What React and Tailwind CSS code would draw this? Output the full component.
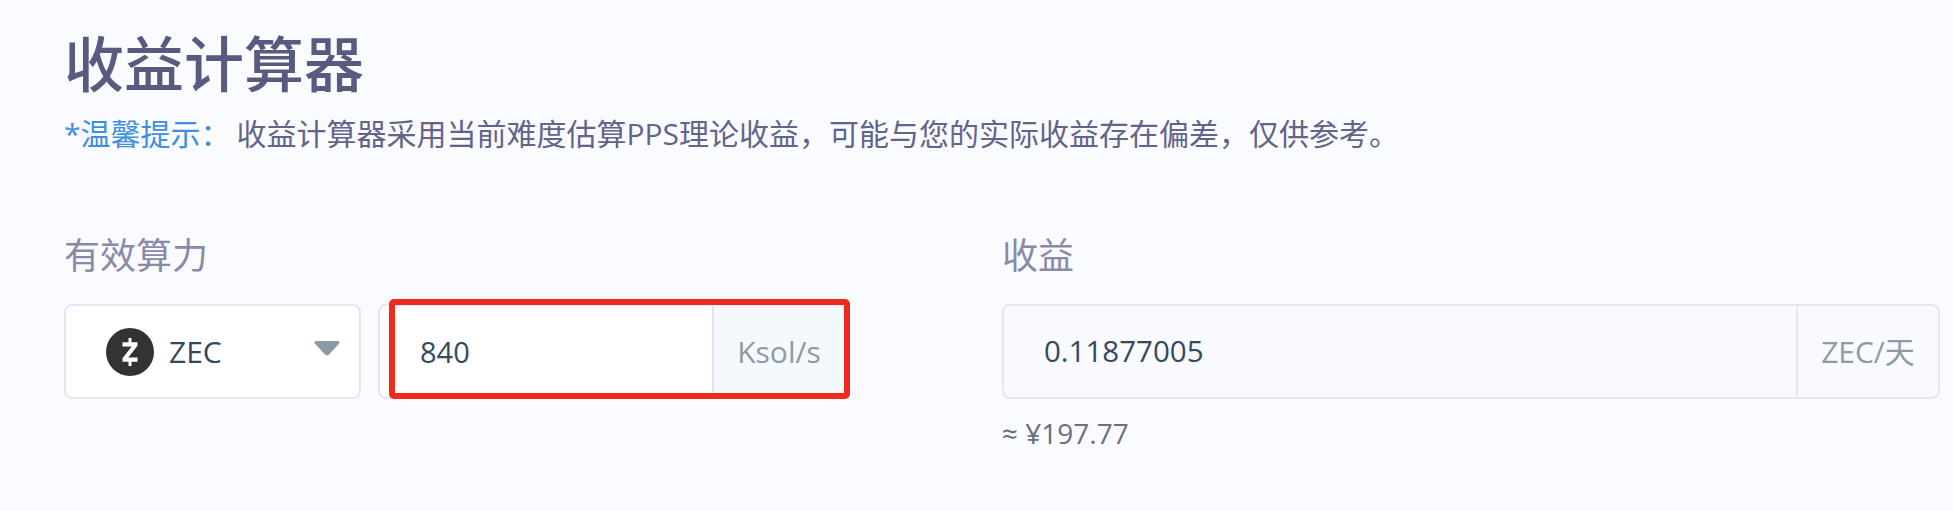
const ZecIcon = () => {
  return (
    <svg width="48" height="48" viewBox="0 0 48 48" className="shrink-0">
      <circle cx="24" cy="24" r="24" fill="#333333" />
      <path
        d="M22.5 10h3v4.2h6v3.6L22.3 29.6h9.2v4.2h-6V38h-3v-4.2h-6v-3.6l9.2-11.8h-9.2v-4.2h6z"
        fill="#ffffff"
      />
    </svg>
  );
};

const App = () => {
  return (
    <div className="w-full h-[511px] overflow-hidden bg-[#fafbff] pl-[64px] pt-[24px] font-['Open_Sans','Noto_Sans_CJK_SC',sans-serif]">
      <h1 className="text-[60px] leading-[80px] font-medium text-[#5a5a80]">
        收益计算器
      </h1>
      <p className="mt-[10px] text-[30px] leading-[40px] text-[#63648a]">
        <span className="text-[#3f8fe0]">*温馨提示：</span>
        <span className="ml-[6px]">
          收益计算器采用当前难度估算PPS理论收益，可能与您的实际收益存在偏差，仅供参考。
        </span>
      </p>

      <div className="mt-[78px] flex">
        <div className="w-[938px] shrink-0">
          <div className="text-[36px] leading-[48px] text-[#8a8aa8]">有效算力</div>
          <div className="mt-[24px] flex gap-[17px]">
            <div className="w-[297px] h-[95px] flex items-center bg-white border-2 border-[#e5e5f5] rounded-[8px] pl-[40px] pr-[19px]">
              <ZecIcon />
              <span className="ml-[15px] text-[30px] text-[#34495e]">ZEC</span>
              <svg width="26" height="16" viewBox="0 0 26 16" className="ml-auto mb-[8px]">
                <path d="M2 1h22a1.5 1.5 0 0 1 1.2 2.4L15 14.4a2.6 2.6 0 0 1-4 0L.8 3.4A1.5 1.5 0 0 1 2 1z" fill="#8a9ba5" />
              </svg>
            </div>

            <div className="relative w-[468px] h-[95px] flex bg-white border-2 border-[#e5e5f5] rounded-[8px]">
              <div className="flex-1 flex items-center pl-[40px] text-[29px] text-[#34495e]">840</div>
              <div className="w-[132px] flex items-center justify-center bg-[#f5f8fc] border-l-2 border-[#e0e4f0] rounded-r-[8px] text-[30px] text-[#8c9ba5]">
                Ksol/s
              </div>
              <div className="absolute left-[9px] -top-[7px] w-[461px] h-[100px] border-[6px] border-[#ee2a1e] rounded-[5px]" />
            </div>
          </div>
        </div>

        <div className="w-[938px] shrink-0">
          <div className="text-[36px] leading-[48px] text-[#8a8aa8]">收益</div>
          <div className="mt-[24px] h-[95px] flex bg-[#f8fafe] border-2 border-[#e5e5f5] rounded-[8px]">
            <div className="flex-1 flex items-center pl-[40px] text-[29.5px] text-[#34495e]">0.11877005</div>
            <div className="w-[142px] flex items-center justify-center border-l-2 border-[#e5e5f5] text-[30px] text-[#8c9ba5]">
              ZEC/天
            </div>
          </div>
          <div className="mt-[17px] text-[28px] leading-[34px] text-[#6a6f80]">≈ ¥197.77</div>
        </div>
      </div>
    </div>
  );
};

export default App;
